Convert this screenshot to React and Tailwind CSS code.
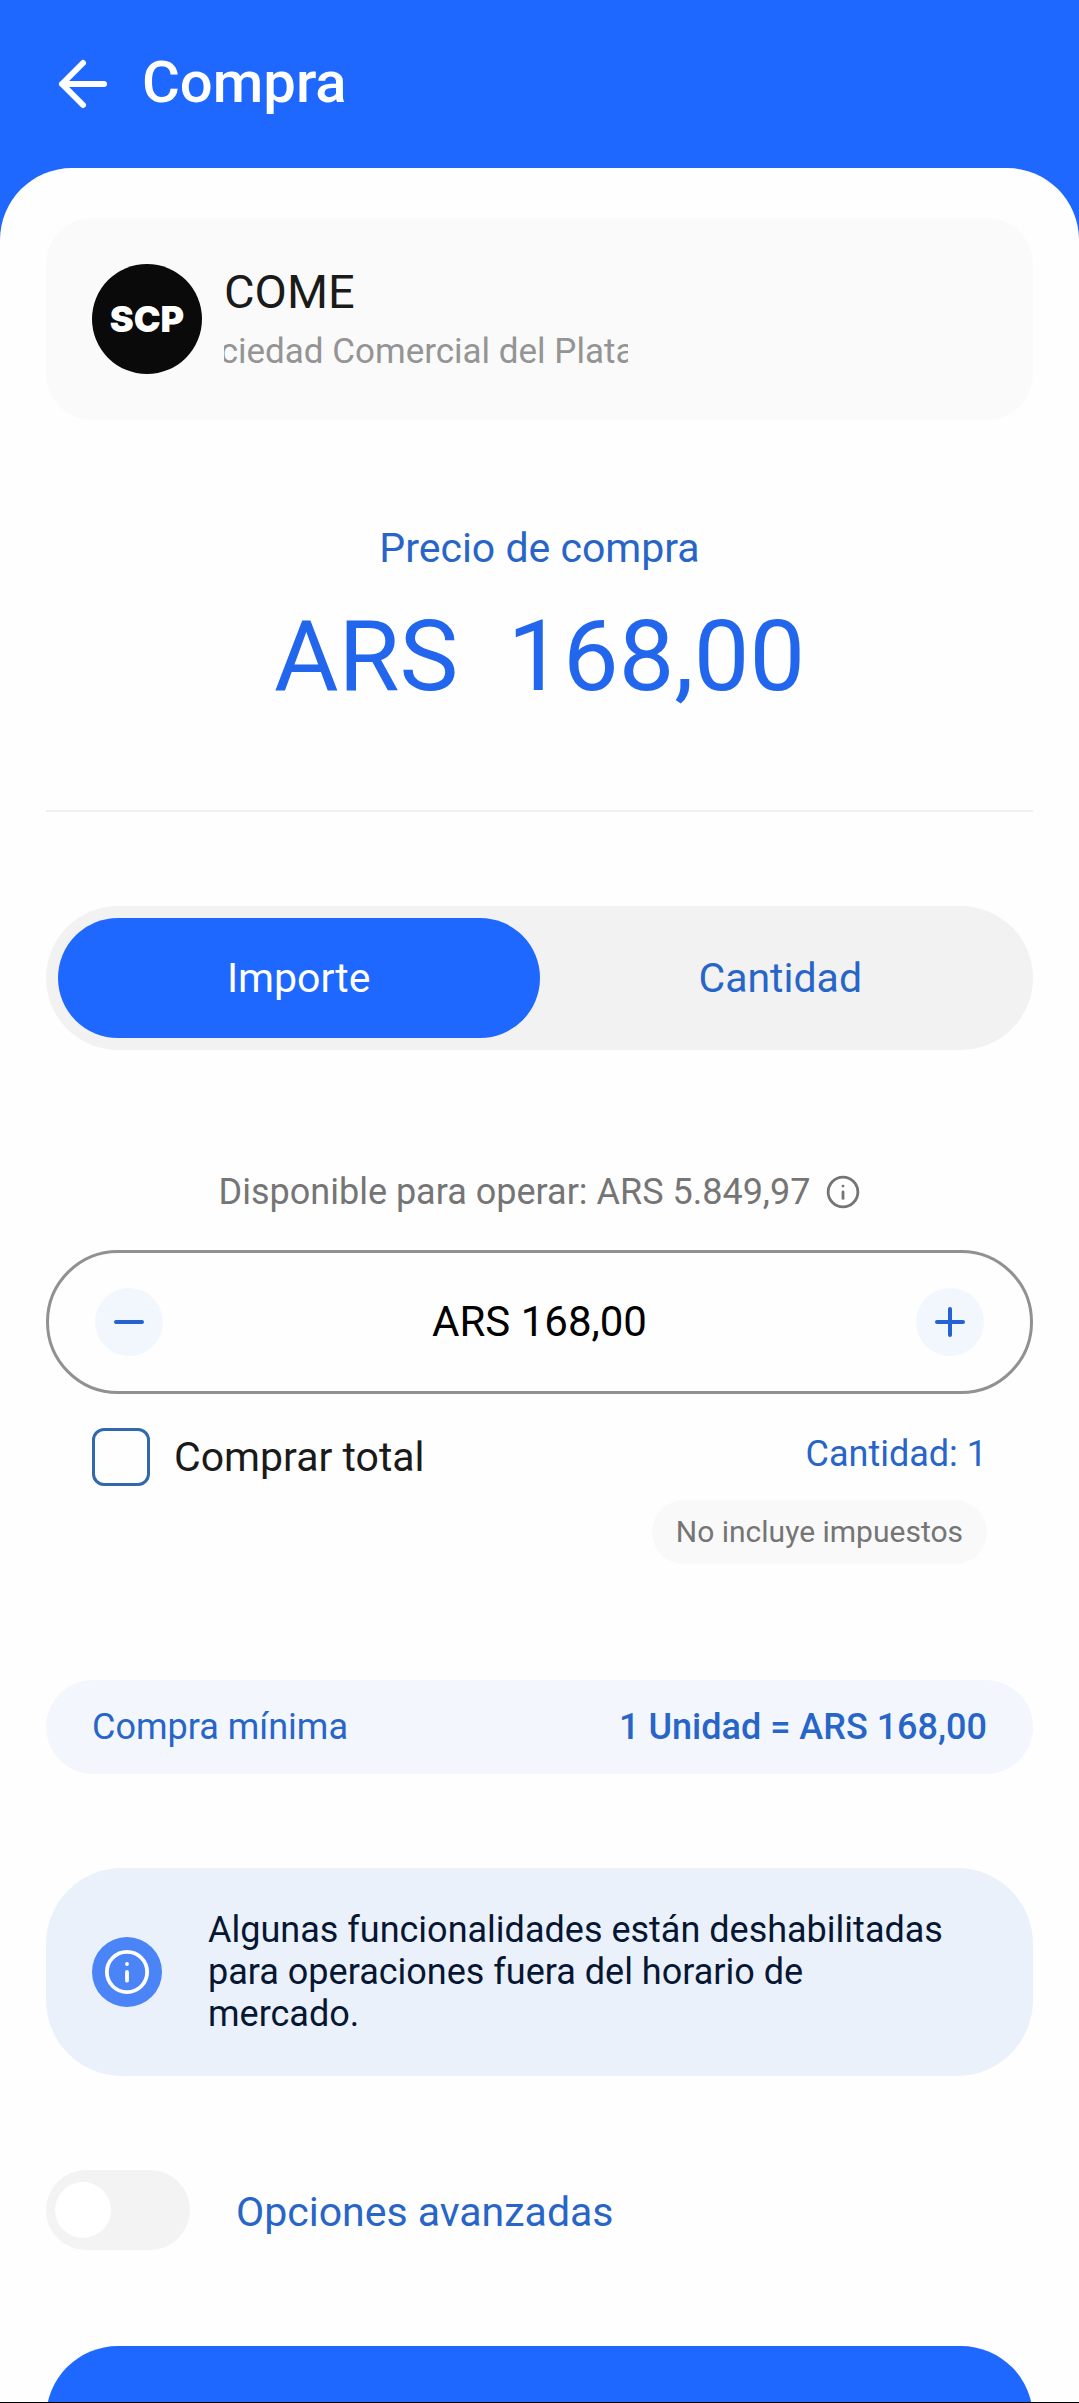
import React, { useState } from 'react';

const PRICE = 168;

function formatArs(value) {
  return value.toLocaleString('es-AR', { minimumFractionDigits: 2, maximumFractionDigits: 2 });
}

function InfoIcon({ className }) {
  return (
    <svg viewBox="0 0 24 24" fill="none" stroke="currentColor" strokeWidth="2" strokeLinecap="round" className={className}>
      <circle cx="12" cy="12" r="10.5" />
      <path d="M12 12v4.5" />
      <path d="M12 7.8v.01" />
    </svg>
  );
}

function StepButton({ label, onClick, children }) {
  return (
    <button
      type="button"
      aria-label={label}
      onClick={onClick}
      className="flex size-17 shrink-0 items-center justify-center rounded-full bg-[#f2f7fe] text-[#2463d1]"
    >
      <svg viewBox="0 0 32 32" fill="none" stroke="currentColor" strokeWidth="4" strokeLinecap="round" className="size-8">
        {children}
      </svg>
    </button>
  );
}

export default function App() {
  const [mode, setMode] = useState('importe');
  const [quantity, setQuantity] = useState(1);
  const [buyAll, setBuyAll] = useState(false);
  const [advanced, setAdvanced] = useState(false);

  const tabClass = (active) =>
    `flex-1 rounded-full text-[41px] leading-12 ${active ? 'bg-[#1e67ff] text-white' : 'text-[#2865c8]'}`;

  return (
    <div className="flex h-screen flex-col border-b border-black bg-[#1e67ff] font-[Roboto,sans-serif] text-[#1a1a1a]">
      {/* Header */}
      <header className="flex h-42 shrink-0 items-center gap-8 px-14">
        <button type="button" aria-label="Volver" className="text-white">
          <svg viewBox="0 0 54 54" fill="none" stroke="currentColor" strokeWidth="6" strokeLinecap="round" strokeLinejoin="round" className="size-[54px]">
            <path d="M48 27H6M27 6L6 27l21 21" />
          </svg>
        </button>
        <h1 className="pb-1 text-[58px] leading-16 font-medium text-white">Compra</h1>
      </header>

      <main className="flex-1 overflow-y-auto rounded-t-[72px] bg-[#fefefe] px-[46px] pt-[50px] [scrollbar-width:none]">
        {/* Stock */}
        <section className="flex items-center gap-[22px] rounded-[46px] bg-[#fafafa] p-[46px]">
          <div className="flex size-[110px] shrink-0 items-center justify-center rounded-full bg-[#0a0a0a]">
            <span className="font-[Inter,sans-serif] text-[36px] leading-10 font-black text-white">SCP</span>
          </div>
          <div className="w-[404px] pt-1">
            <h2 className="text-[47px] leading-12">COME</h2>
            <div className="mt-3.5 flex justify-center overflow-hidden text-[35px] leading-11 text-[#949494]">
              <p className="whitespace-nowrap">Sociedad Comercial del Plata S.</p>
            </div>
          </div>
        </section>

        {/* Price */}
        <section className="border-b-2 border-[#f0f0f0] pt-26 pb-[98px] text-center">
          <p className="text-[41px] leading-12 text-[#2865c8]">Precio de compra</p>
          <p className="mt-7 text-[99px] leading-28 whitespace-pre text-[#2166ec]">{`ARS  ${formatArs(PRICE)}`}</p>
        </section>

        {/* Mode */}
        <div role="tablist" className="mt-[94px] flex h-36 rounded-full bg-[#f2f2f2] p-3">
          <button type="button" role="tab" aria-selected={mode === 'importe'} onClick={() => setMode('importe')} className={tabClass(mode === 'importe')}>
            Importe
          </button>
          <button type="button" role="tab" aria-selected={mode === 'cantidad'} onClick={() => setMode('cantidad')} className={tabClass(mode === 'cantidad')}>
            Cantidad
          </button>
        </div>

        {/* Amount */}
        <div className="mt-30 flex items-center justify-center gap-4 text-[#757575]">
          <p className="text-[36px] leading-11">Disponible para operar: ARS 5.849,97</p>
          <button type="button" aria-label="Más información">
            <InfoIcon className="size-[34px]" />
          </button>
        </div>

        <div className="mt-9 flex h-36 items-center rounded-full border-3 border-[#919191] px-[46px]">
          <StepButton label="Restar" onClick={() => setQuantity((q) => Math.max(1, q - 1))}>
            <path d="M3 16h26" />
          </StepButton>
          <input
            type="text"
            readOnly
            aria-label="Importe"
            value={`ARS ${formatArs(PRICE * quantity)}`}
            className="min-w-0 flex-1 bg-transparent text-center text-[42px] leading-12 text-black outline-none"
          />
          <StepButton label="Sumar" onClick={() => setQuantity((q) => q + 1)}>
            <path d="M3 16h26M16 3v26" />
          </StepButton>
        </div>

        <div className="mt-[34px] flex items-start justify-between px-[46px]">
          <label className="flex items-center gap-6 text-[41px] leading-12">
            <input
              type="checkbox"
              checked={buyAll}
              onChange={(e) => setBuyAll(e.target.checked)}
              className="size-[58px] appearance-none rounded-xl border-3 border-[#3268ad] checked:bg-[#1e67ff]"
            />
            Comprar total
          </label>
          <div className="flex flex-col items-end gap-6 pt-1">
            <p className="text-[36px] leading-11 text-[#2865c8]">Cantidad: {quantity}</p>
            <p className="rounded-full bg-[#f9f9f9] px-6 py-3 text-[30px] leading-10 text-[#757575]">No incluye impuestos</p>
          </div>
        </div>

        {/* Minimum */}
        <div className="mt-[116px] flex items-center justify-between rounded-full bg-[#f3f7fd] px-[46px] py-[23px] text-[36px] leading-12 text-[#2865c8]">
          <span>Compra mínima</span>
          <span className="font-medium">1 Unidad = ARS 168,00</span>
        </div>

        {/* Notice */}
        <div className="mt-[94px] flex items-center gap-[46px] rounded-[76px] bg-[#eaf1fa] px-[46px] py-[41px] text-[#071733]">
          <div className="flex size-[70px] shrink-0 items-center justify-center rounded-full bg-[#4a84f7] text-white">
            <InfoIcon className="size-[46px]" />
          </div>
          <p className="text-[36px] leading-[42px]">
            Algunas funcionalidades están deshabilitadas
            <br />
            para operaciones fuera del horario de
            <br />
            mercado.
          </p>
        </div>

        {/* Advanced options */}
        <label className="mt-[94px] flex items-center gap-[46px] text-[41px] leading-12 text-[#2865c8]">
          <input
            type="checkbox"
            role="switch"
            checked={advanced}
            onChange={(e) => setAdvanced(e.target.checked)}
            className="flex h-20 w-36 appearance-none items-center rounded-full bg-[#f3f3f3] px-[9px] before:size-14 before:rounded-full before:bg-white checked:justify-end checked:bg-[#1e67ff]"
          />
          <span className="pt-1">Opciones avanzadas</span>
        </label>

        <button type="button" aria-label="Continuar" className="mt-24 mb-12 block h-36 w-full rounded-full bg-[#1e67ff]" />
      </main>
    </div>
  );
}
